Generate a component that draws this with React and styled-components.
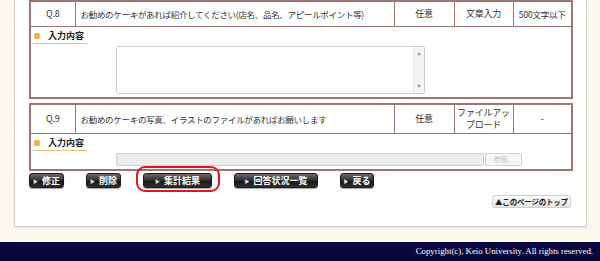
import React from 'react'
import styled, { createGlobalStyle } from 'styled-components'

const GlobalStyle = createGlobalStyle`
  html, body { margin: 0; padding: 0; }
  body {
    background: #fdf8ee;
    font-family: "Noto Sans CJK JP", "Liberation Sans", sans-serif;
  }
`

const BORDER = '#9e7474'

const questions = [
  {
    no: 'Q.8',
    text: 'お勧めのケーキがあれば紹介してください(店名、品名、アピールポイント等)',
    need: '任意',
    type: ['文章入力'],
    limit: '500文字以下',
    input: 'text',
  },
  {
    no: 'Q.9',
    text: 'お勧めのケーキの写真、イラストのファイルがあればお願いします',
    need: '任意',
    type: ['ファイルアッ', 'プロード'],
    limit: '-',
    input: 'file',
  },
]

const buttons = [
  { label: '修正', w: 35 },
  { label: '削除', w: 35 },
  { label: '集計結果', w: 69, marked: true },
  { label: '回答状況一覧', w: 84 },
  { label: '戻る', w: 34 },
]

const App = () => {
  return (
    <Page>
      <GlobalStyle />
      <Main>
        <Panel>
          {questions.map((q) => (
            <QTable key={q.no}>
              <colgroup>
                <col style={{ width: 45 }} />
                <col style={{ width: 319 }} />
                <col style={{ width: 60 }} />
                <col style={{ width: 59 }} />
                <col style={{ width: 59 }} />
              </colgroup>
              <tbody>
                <tr>
                  <Cell h={q.input === 'file' ? 28 : 24}>{q.no}</Cell>
                  <Cell align="left" pad={5} tight>{q.text}</Cell>
                  <Cell>{q.need}</Cell>
                  <Cell>
                    {q.type.map((t) => (
                      <div key={t}>{t}</div>
                    ))}
                  </Cell>
                  <Cell small={q.limit.length > 1}>{q.limit}</Cell>
                </tr>
                <tr>
                  <InputCell colSpan={5}>
                    <Label>
                      <Square />
                      入力内容
                    </Label>
                    {q.input === 'text' ? (
                      <TextBox>
                        <ScrollTrack>
                          <span>▲</span>
                          <span>▼</span>
                        </ScrollTrack>
                      </TextBox>
                    ) : (
                      <FileRow>
                        <FileField />
                        <BrowseButton>参照...</BrowseButton>
                      </FileRow>
                    )}
                  </InputCell>
                </tr>
              </tbody>
            </QTable>
          ))}

          <ButtonRow>
            {buttons.map((b) => (
              <ButtonSlot key={b.label} marked={b.marked}>
                <DarkButton w={b.w}>
                  <Arrow>▶</Arrow>
                  {b.label}
                </DarkButton>
              </ButtonSlot>
            ))}
          </ButtonRow>

          <TopRow>
            <TopButton>▲このページのトップ</TopButton>
          </TopRow>
        </Panel>
      </Main>
      <Footer>Copyright(c), Keio University. All rights reserved.</Footer>
      <BottomStrip />
    </Page>
  )
}

export default App

const Page = styled.div`
  width: 600px;
  height: 261px;
  overflow: hidden;
  display: flex;
  flex-direction: column;
`

const Main = styled.div`
  padding: 0 13px 15px 14px;
`

const Panel = styled.div`
  background: #fff;
  border: 1px solid #cfcfcf;
  border-top: none;
  padding: 0 15px 18px 14px;
  box-shadow: 0 1px 1px rgba(0, 0, 0, 0.08);
`

const QTable = styled.table`
  width: 542px;
  border-collapse: collapse;
  table-layout: fixed;
  border: 2px solid ${BORDER};
  background: #fff;
  & + & {
    margin-top: 4px;
  }
`

const Cell = styled.td`
  border: 1px solid ${BORDER};
  height: ${(p) => p.h || 0}px;
  padding: 0 ${(p) => p.pad || 0}px;
  text-align: ${(p) => p.align || 'center'};
  font-size: ${(p) => (p.small || p.tight ? 8.5 : 9)}px;
  letter-spacing: ${(p) => (p.tight ? -0.3 : -0.2)}px;
  line-height: 12px;
  color: #333;
  white-space: nowrap;
  overflow: hidden;
`

const InputCell = styled.td`
  border: 1px solid ${BORDER};
  padding: 0 0 3px 2px;
  vertical-align: top;
  font-size: 0;
  line-height: 0;
`

const Label = styled.div`
  display: flex;
  width: fit-content;
  align-items: center;
  gap: 8px;
  margin-top: 3px;
  padding: 0 3px 2px 1px;
  border-bottom: 1px solid #e2c27e;
  font-size: 9px;
  font-weight: bold;
  line-height: 11px;
  color: #222;
`

const Square = styled.span`
  width: 6px;
  height: 6px;
  background: #f2ac3a;
  box-shadow: inset 0 0 0 1px #f7c46c;
`

const TextBox = styled.div`
  box-sizing: border-box;
  margin: 2px 0 0 83px;
  width: 309px;
  height: 48px;
  border: 1px solid #d0d0d0;
  border-radius: 2px;
  display: flex;
  justify-content: flex-end;
`

const ScrollTrack = styled.div`
  width: 10px;
  background: #f4f4f4;
  border-left: 1px solid #e6e6e6;
  display: flex;
  flex-direction: column;
  justify-content: space-between;
  align-items: center;
  padding: 5px 0 4px;
  font-size: 4px;
  line-height: 5px;
  color: #999;
`

const FileRow = styled.div`
  display: flex;
  align-items: center;
  gap: 1px;
  margin: 2px 0 0 83px;
`

const FileField = styled.div`
  box-sizing: border-box;
  width: 368px;
  height: 13px;
  background: #ececec;
  border: 1px solid #d0d0d0;
  border-radius: 2px;
`

const BrowseButton = styled.div`
  box-sizing: border-box;
  width: 37px;
  height: 13px;
  border: 1px solid #d4d4d4;
  border-radius: 2px;
  background: #f6f6f6;
  color: #c4c4c4;
  font-size: 7px;
  line-height: 11px;
  text-align: center;
`

const ButtonRow = styled.div`
  display: flex;
  gap: 22px;
  margin-top: 2px;
`

const ButtonSlot = styled.div`
  position: relative;
  &::after {
    content: '';
    display: ${(p) => (p.marked ? 'block' : 'none')};
    position: absolute;
    left: -7px;
    right: -8px;
    top: -7px;
    bottom: -4px;
    border: 2px solid #e0161e;
    border-radius: 9px;
  }
`

const DarkButton = styled.div`
  box-sizing: border-box;
  width: ${(p) => p.w}px;
  height: 15px;
  border: 1px solid #1c1c1c;
  border-radius: 3px;
  background: linear-gradient(#6a6a6a, #2c2c2c 50%, #141414 51%, #2e2e2e);
  box-shadow: 0 1px 1px rgba(0, 0, 0, 0.35);
  color: #fff;
  font-size: 9px;
  font-weight: bold;
  line-height: 13px;
  display: flex;
  align-items: center;
  justify-content: center;
  gap: 4px;
`

const Arrow = styled.span`
  font-size: 5px;
  color: #ddd;
`

const TopRow = styled.div`
  display: flex;
  justify-content: flex-end;
  margin-top: 7px;
`

const TopButton = styled.div`
  box-sizing: border-box;
  width: 79px;
  height: 13px;
  border: 1px solid #cfcfcf;
  border-radius: 3px;
  background: linear-gradient(#ffffff, #e4e4e4);
  color: #222;
  font-size: 7.5px;
  font-weight: bold;
  line-height: 11px;
  text-align: center;
  letter-spacing: -0.2px;
`

const Footer = styled.div`
  height: 19px;
  flex-shrink: 0;
  background: #08083e;
  color: #fff;
  font-family: "Liberation Serif", serif;
  font-size: 8.8px;
  line-height: 19px;
  text-align: right;
  padding-right: 7px;
`

const BottomStrip = styled.div`
  flex: 1;
  background: #7c7c80;
`
